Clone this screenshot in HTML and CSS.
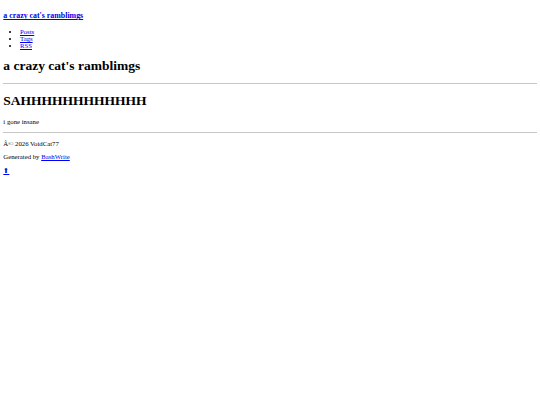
FILE: index.html
```html
<!DOCTYPE html>
<html>
<head>
<meta charset="utf-8">
<title>a crazy cat's ramblimgs</title>
<link rel="stylesheet" href="styles.css">
</head>
<body>
<header>
<h3 class="site"><a href="#">a crazy cat's ramblimgs</a></h3>
<ul class="nav">
<li><a href="#">Posts</a></li>
<li><a href="#">Tags</a></li>
<li><a href="#">RSS</a></li>
</ul>
</header>
<h1>a crazy cat's ramblimgs</h1>
<hr>
<h1>SAHHHHHHHHHHHH</h1>
<p>i gone insane</p>
<hr>
<footer>
<p>Â© 2026 VoidCat77</p>
<p>Generated by <a href="#">BashWrite</a></p>
<p><a href="#">⬆</a></p>
</footer>
</body>
</html>
```
FILE: styles.css
```css
html {
  background: #fff;
}
body {
  margin: 3.33px;
  font-family: "Liberation Serif", "Times New Roman", serif;
  font-size: 6.75px;
  color: #000;
}
a {
  color: #0000ee;
}
p {
  margin: 1em 0;
}
ul {
  margin: 1em 0;
  padding-left: 16.67px;
}
h3 {
  font-size: 1.17em;
  margin: 1em 0;
}
h1 {
  font-size: 2em;
  margin: 0.67em 0;
}
hr {
  margin: 3.33px 0;
  border: none;
  border-top: 1px solid #c6c6c6;
  height: 0;
}
```
